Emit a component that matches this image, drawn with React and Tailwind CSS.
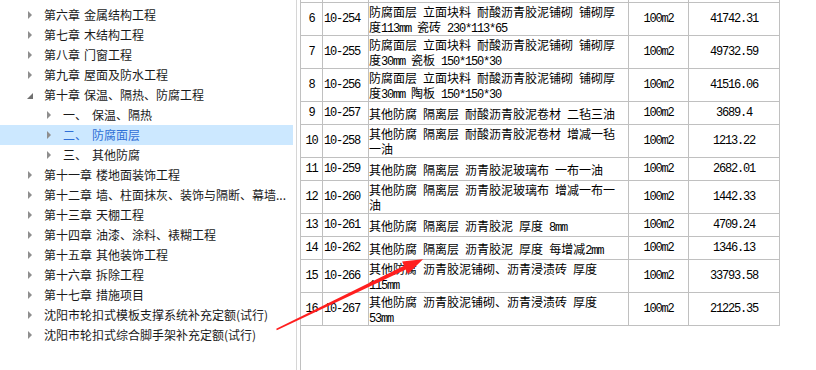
import React from 'react'

const tree = [
    { lv: 1, a: '第六章', b: '金属结构工程' },
    { lv: 1, a: '第七章', b: '木结构工程' },
    { lv: 1, a: '第八章', b: '门窗工程' },
    { lv: 1, a: '第九章', b: '屋面及防水工程' },
    { lv: 1, a: '第十章', b: '保温、隔热、防腐工程', open: true },
    { lv: 2, a: '一、', b: '保温、隔热' },
    { lv: 2, a: '二、', b: '防腐面层', sel: true },
    { lv: 2, a: '三、', b: '其他防腐' },
    { lv: 1, a: '第十一章', b: '楼地面装饰工程' },
    { lv: 1, a: '第十二章', b: '墙、柱面抹灰、装饰与隔断、幕墙...' },
    { lv: 1, a: '第十三章', b: '天棚工程' },
    { lv: 1, a: '第十四章', b: '油漆、涂料、裱糊工程' },
    { lv: 1, a: '第十五章', b: '其他装饰工程' },
    { lv: 1, a: '第十六章', b: '拆除工程' },
    { lv: 1, a: '第十七章', b: '措施项目' },
    { lv: 1, a: '沈阳市轮扣式模板支撑系统补充定额(试行)' },
    { lv: 1, a: '沈阳市轮扣式综合脚手架补充定额(试行)' },
]

const rows = [
    ['6', '10-254', ['防腐面层 立面块料 耐酸沥青胶泥铺砌 铺砌厚', '度113mm 瓷砖 230*113*65'], '41742.31'],
    ['7', '10-255', ['防腐面层 立面块料 耐酸沥青胶泥铺砌 铺砌厚', '度30mm 瓷板 150*150*30'], '49732.59'],
    ['8', '10-256', ['防腐面层 立面块料 耐酸沥青胶泥铺砌 铺砌厚', '度30mm 陶板 150*150*30'], '41516.06'],
    ['9', '10-257', ['其他防腐 隔离层 耐酸沥青胶泥卷材 二毡三油'], '3689.4'],
    ['10', '10-258', ['其他防腐 隔离层 耐酸沥青胶泥卷材 增减一毡', '一油'], '1213.22'],
    ['11', '10-259', ['其他防腐 隔离层 沥青胶泥玻璃布 一布一油'], '2682.01'],
    ['12', '10-260', ['其他防腐 隔离层 沥青胶泥玻璃布 增减一布一', '油'], '1442.33'],
    ['13', '10-261', ['其他防腐 隔离层 沥青胶泥 厚度 8mm'], '4709.24'],
    ['14', '10-262', ['其他防腐 隔离层 沥青胶泥 厚度 每增减2mm'], '1346.13'],
    ['15', '10-266', ['其他防腐 沥青胶泥铺砌、沥青浸渍砖 厚度', '115mm'], '33793.58'],
    ['16', '10-267', ['其他防腐 沥青胶泥铺砌、沥青浸渍砖 厚度', '53mm'], '21225.35'],
]

// ascii runs get a narrow mono face, like the old bitmap font
const Txt = ({ s }) =>
    s.split(/([\x20-\x7e]+)/).map((p, i) =>
        /[\x20-\x7e]/.test(p)
            ? <span key={i} className="font-['Liberation_Mono'] tracking-[-1.2px] whitespace-pre">{p}</span>
            : <span key={i}>{p}</span>
    )

const Arrow = () => (
    <svg className="absolute left-0 top-0 pointer-events-none" width="816" height="370">
        <polygon
            points="276.8,330.2 405.9,269.6 407.9,273.9 423,259.2 402.1,261.6 404.1,265.8 276.2,328.8"
            fill="#ff1f1f"
        />
    </svg>
)

const TreeRow = ({ item }) => (
    <div className={item.sel ? 'h-[20px] flex items-center bg-[#cce8ff] text-[#2f6fd6]' : 'h-[20px] flex items-center text-[#1a1a1a]'}>
        <div className={item.lv === 1 ? 'w-[44px] shrink-0 flex justify-end pr-[11px]' : 'w-[63px] shrink-0 flex justify-end pr-[11px]'}>
            {item.open ? (
                <svg width="6" height="6" className="mt-[2px]"><polygon points="6,0 6,6 0,6" fill="#707070" /></svg>
            ) : (
                <svg width="5" height="8"><polygon points="0,0 4,4 0,8" fill="#8e8e8e" /></svg>
            )}
        </div>
        <span className="whitespace-nowrap">{item.a}</span>
        {item.b && (
            <span className={item.lv === 1 ? 'ml-[4px] whitespace-nowrap' : 'ml-[5px] whitespace-nowrap'}>
                {item.b}
            </span>
        )}
    </div>
)

const Row = ({ r }) => {
    const [idx, code, lines, val] = r
    const dbl = lines.length > 1
    return (
        <div className={dbl ? 'flex h-[33px] border-b border-[#c0c0c0]' : 'flex h-[23px] border-b border-[#c0c0c0]'}>
            <div className="w-[22px] border-r border-[#c0c0c0] flex items-center justify-center"><Txt s={idx} /></div>
            <div className="w-[46px] border-r border-[#c0c0c0] flex items-center pl-[1px]"><Txt s={code} /></div>
            <div className="w-[260px] border-r border-[#c0c0c0] flex flex-col justify-center whitespace-nowrap overflow-hidden">
                {lines.map((l, i) => <div key={i} className="h-[15px] leading-[15px]"><Txt s={l} /></div>)}
            </div>
            <div className="w-[60px] border-r border-[#c0c0c0] flex items-center justify-center"><Txt s="100m2" /></div>
            <div className="w-[91px] border-r border-[#c0c0c0] flex items-center justify-center"><Txt s={val} /></div>
        </div>
    )
}

export default function App() {
    return (
        <div className="relative w-[816px] h-[370px] overflow-hidden bg-white flex font-['Noto_Sans_CJK_SC',sans-serif] text-[12px] leading-[20px]">
            <div className="w-[297px] h-full shrink-0 border-r border-[#d6d6d6] pt-[5px] pr-[3px]">
                {tree.map((t, i) => <TreeRow key={i} item={t} />)}
            </div>

            <div className="ml-[3px] h-full border-l border-[#c0c0c0] text-black leading-[15px]">
                <div className="flex h-[3px] border-b border-[#c0c0c0]">
                    <div className="w-[22px] border-r border-[#c0c0c0]"></div>
                    <div className="w-[46px] border-r border-[#c0c0c0]"></div>
                    <div className="w-[260px] border-r border-[#c0c0c0]"></div>
                    <div className="w-[60px] border-r border-[#c0c0c0]"></div>
                    <div className="w-[91px] border-r border-[#c0c0c0]"></div>
                </div>
                {rows.map((r) => <Row key={r[0]} r={r} />)}
            </div>

            <Arrow />
        </div>
    )
}
